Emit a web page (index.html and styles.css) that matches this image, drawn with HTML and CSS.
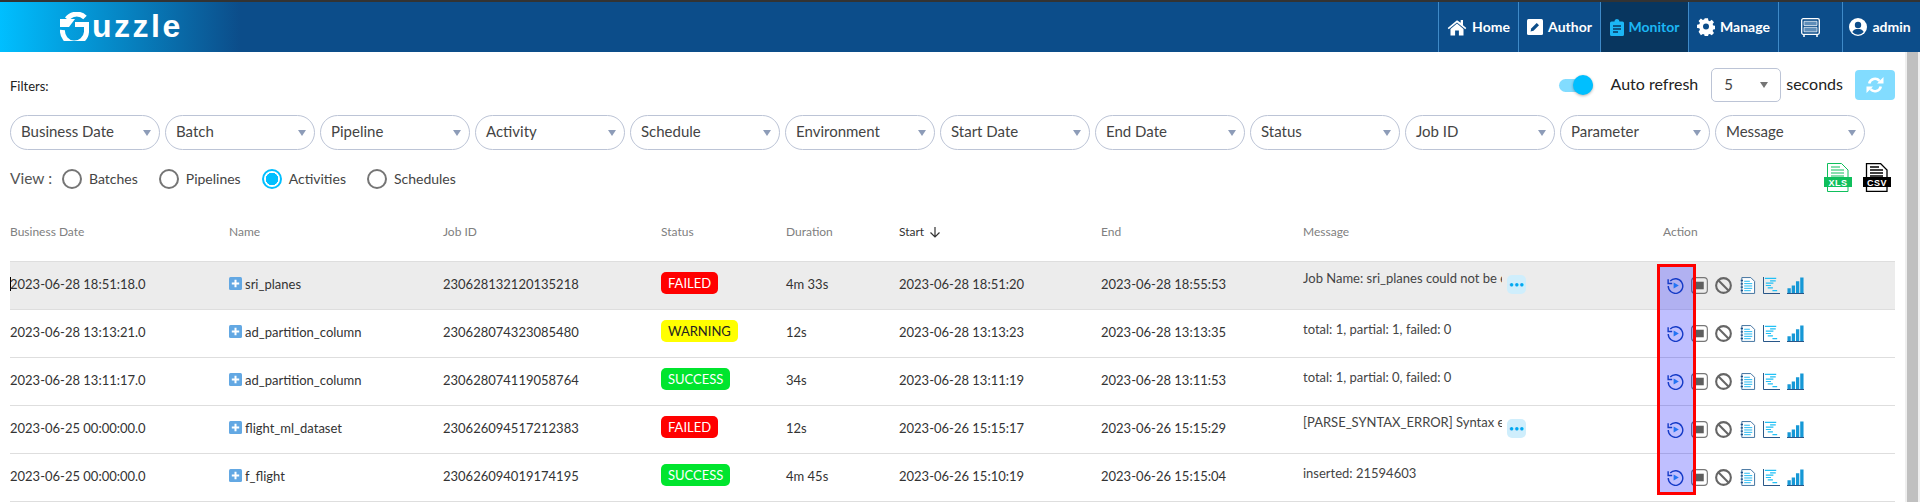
FILE: index.html
```html
<!DOCTYPE html>
<html lang="en">
<head>
<meta charset="utf-8">
<title>Guzzle</title>
<link rel="stylesheet" href="styles.css">
</head>
<body>
<svg class="sprite" width="0" height="0">
  <symbol id="i-replay" viewBox="0 0 18 18"><path d="M3.400 4.300A7.700 7.700 0 1 1 1.300 9.500" fill="none" stroke="#1d4fb5" stroke-width="1.500"/><path d="M1.200 2.500v4.300h4.300" fill="none" stroke="#1d4fb5" stroke-width="1.500"/><path d="M7 5.800l5.500 3.200L7 12.200z" fill="#2f9bf0"/></symbol>
  <symbol id="i-stop" viewBox="0 0 18 18"><rect x=".7" y=".7" width="16.600" height="16.600" rx="3.500" fill="none" stroke="#777" stroke-width="1.200"/><rect x="4.500" y="5" width="9" height="8" fill="#5e5e5e"/></symbol>
  <symbol id="i-ban" viewBox="0 0 18 18"><circle cx="9" cy="9" r="7.800" fill="none" stroke="#666" stroke-width="2.200"/><path d="M3.500 3.500l11 11" stroke="#666" stroke-width="2.200"/></symbol>
  <symbol id="i-log" viewBox="0 0 16 18"><path d="M2 .6h9.500l4 4v12.800H2z" fill="#fff" stroke="#3a6d9c"/><path d="M4.500 4.500h6M4.500 7h8.500M4.500 9.500h8.500M4.500 12h8.500M4.500 14.500h7" stroke="#19b5f0"/><path d="M2 3v1.500M2 6.500V8M2 10v1.500M2 13.500V15" stroke="#174d86" stroke-width="2.400"/></symbol>
  <symbol id="i-gantt" viewBox="0 0 18 18"><path d="M.5 0v17.500H18" fill="none" stroke="#17497e"/><path d="M2 1.500h12M7.500 4h6M3 6.500h8M3 9h5.500M5 11.500h5.500M10 14.500h5" stroke="#21c0f5" stroke-width="1.300"/></symbol>
  <symbol id="i-bars" viewBox="0 0 18 18"><path d="M0 17.500h18" stroke="#17497e"/><path d="M.5 12h3.500v5H.5zM5 9h3.500v8H5zM9.500 4.500H13V17H9.500zM14 .5h3.500V17H14z" fill="#1698d6"/></symbol>
  <symbol id="i-plus" viewBox="0 0 13 13"><rect width="13" height="13" rx="1.500" fill="#63a8e3"/><path d="M6.500 2.800v7.400M2.800 6.500h7.400" stroke="#fff" stroke-width="2"/></symbol>
</svg>

<header class="topbar">
  <div class="logo">
    <svg class="logo-mark" viewBox="0 0 32 29" width="32" height="29"><path d="M7 7A12 12 0 0 1 25 5.500" fill="none" stroke="#fff" stroke-width="5"/><path d="M0 7h15l-6 8H0z" fill="#fff"/><path d="M2.500 18A12 12 0 0 0 26.500 20V12.500H15" fill="none" stroke="#fff" stroke-width="5"/></svg>
    <span class="logo-text">uzzle</span>
  </div>
  <nav class="nav">
    <a class="nav-item nav-home"><svg width="20" height="18" viewBox="0 0 20 18"><path d="M10 2.300L.7 10l1 1.200L10 4.400l8.300 6.800 1-1.200-3.300-2.700V2h-2.300v2.700z" fill="#fff"/><path d="M10 5.500L3.500 11v6.500h4.600v-5h3.800v5h4.600V11z" fill="#fff"/></svg><span class="nav-label">Home</span></a>
    <a class="nav-item nav-author"><svg width="16" height="16" viewBox="0 0 16 16"><rect width="16" height="16" rx="1.500" fill="#fff"/><path d="M3.500 12.500l.7-3 5.500-5.500 2.300 2.300L6.500 11.800z" fill="#0c4d8a"/></svg><span class="nav-label">Author</span></a>
    <a class="nav-item nav-monitor active"><svg width="14" height="17" viewBox="0 0 14 17"><path d="M1.500 2.500H4.500A2.500 2.500 0 0 1 9.500 2.500h3A1.500 1.500 0 0 1 14 4v11.500a1.500 1.500 0 0 1-1.500 1.500h-11A1.500 1.500 0 0 1 0 15.500V4a1.500 1.500 0 0 1 1.500-1.500z" fill="#1cb6f5"/><path d="M3 7h8M3 10h8M3 13h5" stroke="#08365f" stroke-width="1.400"/></svg><span class="nav-label">Monitor</span></a>
    <a class="nav-item nav-manage"><svg width="18" height="18" viewBox="0 0 18 18"><path d="M7.300 0h3.400l.4 2.400 1.500.7 2-1.400 2.300 2.400-1.400 2 .6 1.500 2.400.4v3.300l-2.400.4-.6 1.500 1.400 2-2.300 2.400-2-1.400-1.500.6-.4 2.400H7.300l-.4-2.400-1.500-.6-2 1.400L1 13.900l1.400-2-.6-1.500L-.6 10V6.700l2.400-.4.600-1.500L1 2.800l2.400-2.400 2 1.400 1.500-.7z" fill="#fff" transform="translate(.6 .2) scale(.97)"/><circle cx="9" cy="8.500" r="3" fill="#0c4d8a"/></svg><span class="nav-label">Manage</span></a>
    <a class="nav-item nav-cab"><svg width="19" height="19" viewBox="0 0 19 19"><rect x=".7" y=".7" width="17.600" height="15.600" rx="1.500" fill="none" stroke="#fff" stroke-width="1.300"/><path d="M3 3.300h13v4.200H3zM3 9.300h13v4.500H3z" fill="#5f8db8" stroke="#fff" stroke-width=".7"/><path d="M3 17v2M16 17v2" stroke="#fff" stroke-width="1.500"/></svg></a>
    <a class="nav-item nav-user"><svg width="18" height="18" viewBox="0 0 18 18"><circle cx="9" cy="9" r="9" fill="#fff"/><circle cx="9" cy="7" r="3.200" fill="#0c4d8a"/><path d="M3.300 14c1.200-2.500 3.400-3 5.700-3s4.500.5 5.700 3A7.500 7.500 0 0 1 3.300 14z" fill="#0c4d8a"/></svg><span class="nav-label">admin</span></a>
  </nav>
</header>

<main class="content">
  <div class="filter-head">
    <span class="filters-label">Filters:</span>
    <div class="refresh">
      <span class="toggle"><span class="toggle-knob"></span></span>
      <span class="refresh-label">Auto refresh</span>
      <span class="seconds-select"><span class="seconds-value">5</span><i class="caret caret-dark"></i></span>
      <span class="refresh-label">seconds</span>
      <button class="refresh-btn"><svg width="18" height="16" viewBox="0 0 18 16"><path d="M3.200 6.500a6 6 0 0 1 10.300-2.700M14.800 9.500a6 6 0 0 1-10.300 2.700" fill="none" stroke="#fff" stroke-width="2.600"/><path d="M11 6.500h6.500V0zM7 9.500H.5V16z" fill="#fff"/></svg></button>
    </div>
  </div>

  <div class="pills">
    <div class="pill">Business Date<i class="caret"></i></div>
    <div class="pill">Batch<i class="caret"></i></div>
    <div class="pill">Pipeline<i class="caret"></i></div>
    <div class="pill">Activity<i class="caret"></i></div>
    <div class="pill">Schedule<i class="caret"></i></div>
    <div class="pill">Environment<i class="caret"></i></div>
    <div class="pill">Start Date<i class="caret"></i></div>
    <div class="pill">End Date<i class="caret"></i></div>
    <div class="pill">Status<i class="caret"></i></div>
    <div class="pill">Job ID<i class="caret"></i></div>
    <div class="pill">Parameter<i class="caret"></i></div>
    <div class="pill">Message<i class="caret"></i></div>
  </div>

  <div class="view-row">
    <div class="view">
      <span class="view-label">View :</span>
      <label class="radio"><i class="dot"></i>Batches</label>
      <label class="radio"><i class="dot"></i>Pipelines</label>
      <label class="radio"><i class="dot on"></i>Activities</label>
      <label class="radio"><i class="dot"></i>Schedules</label>
    </div>
    <div class="exports">
      <svg width="28" height="29" viewBox="0 0 28 29"><path d="M3.500.5h14l6.500 6.500v21.500H3.500z" fill="#fff" stroke="#0fbf5c"/><path d="M7 4h9M7 7h13M7 10h13M7 13h13" stroke="#0fbf5c"/><rect y="14" width="28" height="10" fill="#0fbf5c"/><text class="exp-text" x="14" y="22.500">XLS</text></svg>
      <svg width="28" height="29" viewBox="0 0 28 29"><path d="M3.500.5h14l6.500 6.500v21.500H3.500z" fill="#fff" stroke="#000" stroke-width="1.300"/><path d="M7 4h9M7 7h13M7 10h13M7 13h13" stroke="#000" stroke-width="1.300"/><rect y="14" width="28" height="10" fill="#000"/><text class="exp-text" x="14" y="22.500">CSV</text></svg>
    </div>
  </div>

  <div class="table-wrap">
    <table class="grid">
      <thead>
        <tr>
          <th class="c-date">Business Date</th>
          <th class="c-name">Name</th>
          <th class="c-job">Job ID</th>
          <th class="c-status">Status</th>
          <th class="c-dur">Duration</th>
          <th class="c-start sorted">Start <svg width="12" height="12" viewBox="0 0 12 12"><path d="M6 1v10M1.500 6.500L6 11l4.500-4.500" fill="none" stroke="#333" stroke-width="1.200"/></svg></th>
          <th class="c-end">End</th>
          <th class="c-msg">Message</th>
          <th class="c-act">Action</th>
        </tr>
      </thead>
      <tbody>
        <tr class="selected">
          <td><span class="cursor"></span>2023-06-28 18:51:18.0</td>
          <td><svg class="plus"><use href="#i-plus"/></svg>sri_planes</td>
          <td>230628132120135218</td>
          <td><span class="badge failed">FAILED</span></td>
          <td>4m 33s</td>
          <td>2023-06-28 18:51:20</td>
          <td>2023-06-28 18:55:53</td>
          <td class="msg"><div class="msg-inner"><span class="msg-text">Job Name: sri_planes could not be e</span><span class="more">•••</span></div></td>
          <td class="acts"><svg class="a"><use href="#i-replay"/></svg><svg class="a"><use href="#i-stop"/></svg><svg class="a"><use href="#i-ban"/></svg><svg class="a"><use href="#i-log"/></svg><svg class="a"><use href="#i-gantt"/></svg><svg class="a"><use href="#i-bars"/></svg></td>
        </tr>
        <tr>
          <td>2023-06-28 13:13:21.0</td>
          <td><svg class="plus"><use href="#i-plus"/></svg>ad_partition_column</td>
          <td>230628074323085480</td>
          <td><span class="badge warning">WARNING</span></td>
          <td>12s</td>
          <td>2023-06-28 13:13:23</td>
          <td>2023-06-28 13:13:35</td>
          <td class="msg"><div class="msg-inner plain"><span class="msg-text">total: 1, partial: 1, failed: 0</span></div></td>
          <td class="acts"><svg class="a"><use href="#i-replay"/></svg><svg class="a"><use href="#i-stop"/></svg><svg class="a"><use href="#i-ban"/></svg><svg class="a"><use href="#i-log"/></svg><svg class="a"><use href="#i-gantt"/></svg><svg class="a"><use href="#i-bars"/></svg></td>
        </tr>
        <tr>
          <td>2023-06-28 13:11:17.0</td>
          <td><svg class="plus"><use href="#i-plus"/></svg>ad_partition_column</td>
          <td>230628074119058764</td>
          <td><span class="badge success">SUCCESS</span></td>
          <td>34s</td>
          <td>2023-06-28 13:11:19</td>
          <td>2023-06-28 13:11:53</td>
          <td class="msg"><div class="msg-inner plain"><span class="msg-text">total: 1, partial: 0, failed: 0</span></div></td>
          <td class="acts"><svg class="a"><use href="#i-replay"/></svg><svg class="a"><use href="#i-stop"/></svg><svg class="a"><use href="#i-ban"/></svg><svg class="a"><use href="#i-log"/></svg><svg class="a"><use href="#i-gantt"/></svg><svg class="a"><use href="#i-bars"/></svg></td>
        </tr>
        <tr>
          <td>2023-06-25 00:00:00.0</td>
          <td><svg class="plus"><use href="#i-plus"/></svg>flight_ml_dataset</td>
          <td>230626094517212383</td>
          <td><span class="badge failed">FAILED</span></td>
          <td>12s</td>
          <td>2023-06-26 15:15:17</td>
          <td>2023-06-26 15:15:29</td>
          <td class="msg"><div class="msg-inner"><span class="msg-text">[PARSE_SYNTAX_ERROR] Syntax e</span><span class="more">•••</span></div></td>
          <td class="acts"><svg class="a"><use href="#i-replay"/></svg><svg class="a"><use href="#i-stop"/></svg><svg class="a"><use href="#i-ban"/></svg><svg class="a"><use href="#i-log"/></svg><svg class="a"><use href="#i-gantt"/></svg><svg class="a"><use href="#i-bars"/></svg></td>
        </tr>
        <tr>
          <td>2023-06-25 00:00:00.0</td>
          <td><svg class="plus"><use href="#i-plus"/></svg>f_flight</td>
          <td>230626094019174195</td>
          <td><span class="badge success">SUCCESS</span></td>
          <td>4m 45s</td>
          <td>2023-06-26 15:10:19</td>
          <td>2023-06-26 15:15:04</td>
          <td class="msg"><div class="msg-inner plain"><span class="msg-text">inserted: 21594603</span></div></td>
          <td class="acts"><svg class="a"><use href="#i-replay"/></svg><svg class="a"><use href="#i-stop"/></svg><svg class="a"><use href="#i-ban"/></svg><svg class="a"><use href="#i-log"/></svg><svg class="a"><use href="#i-gantt"/></svg><svg class="a"><use href="#i-bars"/></svg></td>
        </tr>
      </tbody>
    </table>
    <div class="highlight"></div>
  </div>
</main>
<div class="scrollbar"><div class="scroll-thumb"></div></div>
</body>
</html>
```
FILE: styles.css
```css
* { box-sizing: border-box; }
html, body { margin: 0; padding: 0; height: 502px; overflow: hidden; }
body { font-family: Lato, "Open Sans", sans-serif; color: #333; background: #fff; font-size: 14px; position: relative; }
.sprite { position: absolute; }

.topbar { height: 52px; border-top: 2px solid #333; display: flex; justify-content: space-between; background: linear-gradient(90deg, #00bfff 0, #0c4d8a 240px); }
.logo { display: flex; align-items: center; padding-left: 60px; }
.logo-mark { display: block; margin-top: -2px; }
.logo-text { font-family: "Liberation Sans", sans-serif; font-weight: 700; font-size: 32px; line-height: 30px; color: #fff; letter-spacing: 2.500px; margin-top: -2px; }
.nav { display: flex; }
.nav-item { display: flex; align-items: center; justify-content: center; gap: 5px; color: #fff; font-size: 14px; font-weight: 700; border-left: 1px solid #3f8ac8; }
.nav-label { margin-bottom: 2px; }
.nav-home { width: 80px; }
.nav-author { width: 82px; }
.nav-monitor { width: 88px; }
.nav-manage { width: 90px; }
.nav-cab { width: 64px; }
.nav-user { width: 78px; padding-right: 3px; }
.nav-item.active { background: #08365f; color: #1cb6f5; }

.content { padding: 0 25px 0 10px; }
.filter-head { height: 63px; display: flex; justify-content: space-between; align-items: flex-start; }
.filters-label { font-size: 13px; color: #222; margin-top: 25px; line-height: 18px; }
.refresh { display: flex; align-items: center; margin-top: 16px; height: 34px; }
.toggle { position: relative; width: 34px; height: 13px; border-radius: 7px; background: #82dcff; margin-right: 18px; display: block; }
.toggle-knob { position: absolute; right: 0; top: -3.500px; width: 20px; height: 20px; border-radius: 50%; background: #00bfff; box-shadow: 0 1px 3px rgba(0,0,0,.3); }
.refresh-label { font-size: 16px; color: #222; padding-bottom: 3px; }
.seconds-select { width: 70px; height: 34px; margin: 0 5px 0 13px; border: 1px solid #bcc4d6; border-radius: 5px; padding: 0 12px; display: flex; align-items: center; justify-content: space-between; font-size: 15px; color: #444; }
.seconds-value { padding-bottom: 3px; }
.refresh-btn { width: 40px; height: 30px; margin-left: 12px; border: 0; border-radius: 4px; background: #82dcff; display: flex; align-items: center; justify-content: center; padding: 0; }

.caret { display: block; width: 0; height: 0; border-left: 4.500px solid transparent; border-right: 4.500px solid transparent; border-top: 6px solid #8d9cb8; }
.caret-dark { border-top-color: #757575; }

.pills { display: flex; gap: 5px; }
.pill { width: 150px; height: 35px; border: 1px solid #bcc4d6; border-radius: 18px; display: flex; align-items: center; justify-content: space-between; padding: 0 8px 3px 10px; font-size: 15px; color: #444; }
.pill .caret { margin-top: 4px; }

.view-row { display: flex; justify-content: space-between; height: 43px; }
.view { display: flex; align-items: center; height: 34px; margin-top: 12px; font-size: 14px; color: #555; }
.view-label { font-size: 15.500px; color: #555; margin-right: 10px; padding-bottom: 2px; }
.radio { display: flex; align-items: center; margin-right: 21px; font-size: 14px; color: #444; line-height: 16px; }
.dot { display: block; width: 20px; height: 20px; border: 2px solid #757575; border-radius: 50%; margin-right: 7px; }
.dot.on { border-color: #00bfff; background: radial-gradient(circle, #00bfff 0 6px, #fff 6.500px); }
.exports { display: flex; gap: 11px; margin-top: 13px; margin-right: 4px; height: 29px; }
.exp-text { font: 700 9px "Liberation Sans", sans-serif; fill: #fff; text-anchor: middle; letter-spacing: .5px; }

.table-wrap { position: relative; }
.grid { width: 1885px; table-layout: fixed; border-collapse: collapse; }
.grid th { height: 68px; text-align: left; font-weight: 400; font-size: 12px; color: #808080; padding: 10px 0 0 0; vertical-align: middle; }
.grid th.sorted { color: #333; }
.grid th svg { vertical-align: -2px; margin-left: 2px; }
.grid td { height: 48px; padding: 0 0 2px 0; font-size: 13px; color: #333; border-top: 1px solid #dedede; border-bottom: 1px solid #dedede; vertical-align: middle; white-space: nowrap; }
.grid td.msg, .grid td.acts { padding-bottom: 0; }
.c-date { width: 219px; }
.c-name { width: 214px; }
.c-job { width: 218px; }
.c-status { width: 125px; }
.c-dur { width: 113px; }
.c-start { width: 202px; }
.c-end { width: 202px; }
.c-msg { width: 360px; }
.selected td { background: #ececec; }
.cursor { display: inline-block; width: 1px; height: 14px; background: #000; vertical-align: -2px; margin-right: -1px; }
.plus { width: 13px; height: 13px; margin-right: 3px; vertical-align: -1px; }
.badge { display: inline-block; height: 22px; line-height: 22px; padding: 0 7px; border-radius: 5px; font-size: 13px; margin-bottom: 2px; }
.failed { background: #ff0000; color: #fff; }
.warning { background: #ffff00; color: #222; }
.success { background: #00e52e; color: #fff; }
.msg-inner { display: flex; align-items: flex-start; height: 30px; }
.msg-inner.plain { padding-top: 3px; }
.msg-text { display: block; width: 199px; overflow: hidden; font-size: 13px; color: #444; }
.more { width: 19px; height: 19px; margin: 5px 0 0 5px; border-radius: 5px; background: #cfeefc; color: #00a8f0; font-size: 9px; line-height: 19px; text-align: center; }
.a { display: inline-block; width: 17px; height: 17px; margin-right: 7px; vertical-align: middle; }
.grid td.acts { padding-left: 4px; }
.highlight { position: absolute; left: 1647px; top: 71px; width: 39px; height: 231px; border: 3px solid #f00; background: rgba(0,0,255,.25); }
.scrollbar { position: absolute; right: 0; top: 52px; width: 15px; height: 450px; background: #efefef; padding: 0 2px; }
.scroll-thumb { height: 100%; background: #c0c0c0; }
```
